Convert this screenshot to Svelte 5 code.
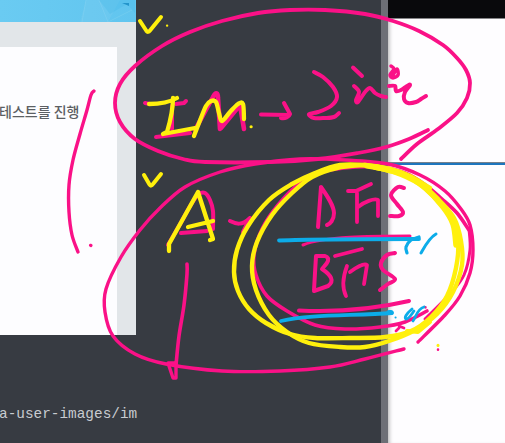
<script>
  // Turns a list of pen positions into a smooth stroke through all of them.
  function smooth(text) {
    const n = text.split(/[ ,]+/).map(Number);
    const p = [];
    for (let i = 0; i < n.length; i += 2) p.push([n[i], n[i + 1]]);
    let d = `M${p[0]}`;
    for (let i = 0; i < p.length - 1; i++) {
      const a = p[i - 1] ?? p[i], b = p[i], c = p[i + 1], e = p[i + 2] ?? c;
      d += `C${b[0] + (c[0] - a[0]) / 6},${b[1] + (c[1] - a[1]) / 6} ${c[0] - (e[0] - b[0]) / 6},${c[1] - (e[1] - b[1]) / 6} ${c}`;
    }
    return d;
  }

  const pink = [
    [smooth('428,130 409,139 386,147 358,153 318,159 270,162 205,162 183,159 158,151 135,139 120,122 115,103 120,84 135,66 162,46 190,32 222,21 258,13 290,10 325,10 365,14 393,21 419,31 443,45 457,58 466,70 470,83 467,98 457,113 438,129 417,144 401,159'), 3.8],
    [smooth('404,349 365,359 330,367 280,371 222,371 166,364 135,354 113,336 105,312 106,289 121,257 140,230 160,208 185,187 220,172 255,164 300,159 345,160 388,164 420,175 445,191 461,209 470,225 473,250 470,273 460,296 445,315 418,342'), 3.4],
    [smooth('469,230 457,213 442,199 424,184 405,173 380,167 355,167 325,171 300,183 278,205 262,229 254,255 256,275 267,296 287,311 315,325 345,329 380,327 405,322 427,311'), 3.6],
    [smooth('469,229 470,250 464,275 450,294 425,319'), 3],
    [smooth('94,91 91,95 87,110 80,134 73,160 69,185 69,212 72,235 78,252'), 3.4],
    ['M90.5 245.3L91 245.5', 3.2],
    ['M145 103L150 104M176 104L184 103L186 101M172 106L172 129M156 137L190 133', 4],
    ['M195 130L213 97C216 91 218 93 218 98L220 129M221 128L240 105L244 129', 4.6],
    ['M261 114.5L289 115M284 103L290 114C289 117 285 119 281 118', 4],
    [smooth('314,72 323,77 333,87 337,97 331,106 318,112 309,114 314,118 325,118 334,117 339,113'), 4],
    ['M353 67.5L362 76', 4],
    [smooth('354,86 359,92 356,100 358,102 365,92 370,88 375,93 381,96 386,97'), 4],
    [smooth('391,66 394,69 390,75 393,78 398,75 397,69 393,75'), 3.5],
    [smooth('389,86 395,86 396,91 401,90 407,86 410,85 405,92 404,99 408,103 416,102 421,99 426,96'), 4],
    [smooth('168,245 179,226 192,203 199,194 205,193 210,200 213,211 213,229'), 4],
    ['M181 233L207 231M230 221C236 224 242 226 250 218M250 218L243 232', 4],
    [smooth('187,264 187,274 184,305 179,336 176,365'), 3.6],
    ['M176 362L176 378L173 378L168 363L176 363', 3.4],
    ['M321 187L318 227M321 187C328 197 334 206 334 213C334 220 330 224 327 225', 4],
    ['M348 191L356 191L371 184M357 193L357 222M358 207C364 202 374 198 378 200L378 216', 3.8],
    [smooth('404,188 398,187 391,195 397,204 403,212 399,216 390,216'), 4],
    ['M303 245C325 236 370 236 410 236', 3],
    ['M316 256L314 290M316 256L325 256C333 259 324 266 322 269C331 275 335 281 328 286L314 291', 4],
    ['M335 256L362 249M347 266C341 282 343 290 346 296M350 272C358 266 365 263 367 265L364 284', 3.8],
    [smooth('395,253 387,255 381,263 383,270 395,279 388,284 380,290'), 4],
    ['M299 310.5C330 312 370 310 409 301', 4],
    ['M396 331L399 328M399 326L404 328M425 307.2L425.4 307.3', 2.7],
    ['M438 349.5L438 349.7', 2.5]
  ];
  const blue = [
    ['M279 240.5C316 239 379 239 419 239', 3.8],
    [smooth('419,237 411,240 406,247 407,253'), 3.2],
    ['M436 234C429 238 425 246 421 253', 3],
    ['M281 321C310 314 354 316 392 313', 3.8],
    ['M389 312.5L391 312.5', 5],
    ['M412 309C406 314 404 318 406 319C409 319 411 315 414 311M424 307C417 309 416 317 413 321', 2.8],
    ['M395.5 317.5L395.6 317.5', 2]
  ];
  const yellow = [
    ['M140 21L146.5 31Q148 33 150 30.5L161 17', 4],
    ['M167 25.7L167.2 25.7', 2.2],
    ['M144 175L149.5 184.5Q151 187 153 184L161 174', 4],
    ['M149 104C159 104 170 102 177 98M173 98C173 111 170 122 167 132L163 134L195 128', 4.3],
    [smooth('194,136 199,123 206,106 211,101 216,102 219,113 222,121 230,112 238,104 243,104 244,119'), 4.3],
    ['M251 126.7L251.2 126.7', 3],
    ['M169 251L169 244L198 192L213 239L210 240M188 227L213 221', 4.3],
    [smooth('430,188 410,176 390,169 365,165 340,165 315,173 292,184 269,200 248,226 237,250 234,272 238,291 249,309 266,323 290,334 315,338 350,338 385,337 411,331 431,317 447,296 456,268 458,242 451,217 436,199 419,184 393,172 366,166'), 4.4],
    [smooth('365,165 337,168 312,177 292,193 272,215 257,242 252,266 256,290 269,315 287,332 309,343 340,347 365,347 389,341 415,330 437,314 453,292 462,265 461,241 454,218 439,200 419,182 393,170 365,165'), 4.4],
    [smooth('375,167 405,175 425,188 443,207 453,224 456,245'), 5.5],
    ['M407 331L418 332L430 322', 4],
    ['M438 345.3L438 345.5', 3]
  ];
</script>

<main class="screen">
  <section class="editor">
    <div class="page">
      <div class="banner">
        <svg width="135" height="22" viewBox="0 0 135 22">
          <path d="M80 22L86 0H120L108 22Z" fill="#8bd3f2" opacity=".2" />
          <path d="M99 0L110 14L127 4L135 13V0Z" fill="#3bb5e6" opacity=".24" />
          <path d="M122 3L129 3L129 6Z" fill="#2495cb" />
          <path d="M82 22L86 0M99 0L108 22L132 10" fill="none" stroke="#a2ddf5" stroke-width=".4" opacity=".6" />
        </svg>
      </div>
      <div class="body"><article><p>테스트를 진행</p></article></div>
    </div>
    <code>a-user-images/im</code>
  </section>
  <div class="divider"></div>
  <section class="side"><header></header><div class="sheet"></div><div class="rest"></div></section>
  <svg class="ink" width="505" height="443" viewBox="0 0 505 443" fill="none" stroke-linecap="round" stroke-linejoin="round">
    <g stroke="#fa1187">{#each pink as [d, w]}<path {d} stroke-width={w} />{/each}</g>
    <g stroke="#0cace9">{#each blue as [d, w]}<path {d} stroke-width={w} />{/each}</g>
    <g stroke="#fff00c">{#each yellow as [d, w]}<path {d} stroke-width={w} />{/each}</g>
  </svg>
</main>

<style>
  .screen { position: relative; display: flex; width: 505px; height: 443px; overflow: hidden; background: #373b42; }
  .editor { width: 381px; display: flex; flex-direction: column; background: #373b42; }
  .page { width: 135.5px; height: 335px; background: #e2e6e9; }
  .banner { height: 22px; background: linear-gradient(90deg, #6acbf2, #61c5ef); }
  .banner svg { display: block; }
  .body { padding-top: 25px; }
  article { width: 116.5px; height: 288px; background: #fdfdff; display: flex; }
  p { margin: 53px 0 0; width: 79.5px; display: flex; justify-content: flex-end; white-space: nowrap; color: #5c5f63; font: 500 14px/22px "Noto Sans CJK KR", sans-serif; }
  code { margin: 69px 0 0 -1px; white-space: nowrap; color: #c8cbd0; font: 14.4px/20px "Liberation Mono", monospace; }
  .divider { width: 7px; background: #6d6f76; }
  .side { flex: 1; display: flex; flex-direction: column; background: #fefdff; box-shadow: inset 4px 0 4px -3px #aaa; }
  header { height: 18px; background: #09090c; border-bottom: 1px solid #858588; }
  .sheet { height: 143px; border-bottom: 1px solid #77818c; }
  .rest { flex: 1; border-top: 2px solid #1d75bd; }
  .ink { position: absolute; inset: 0; }
</style>
